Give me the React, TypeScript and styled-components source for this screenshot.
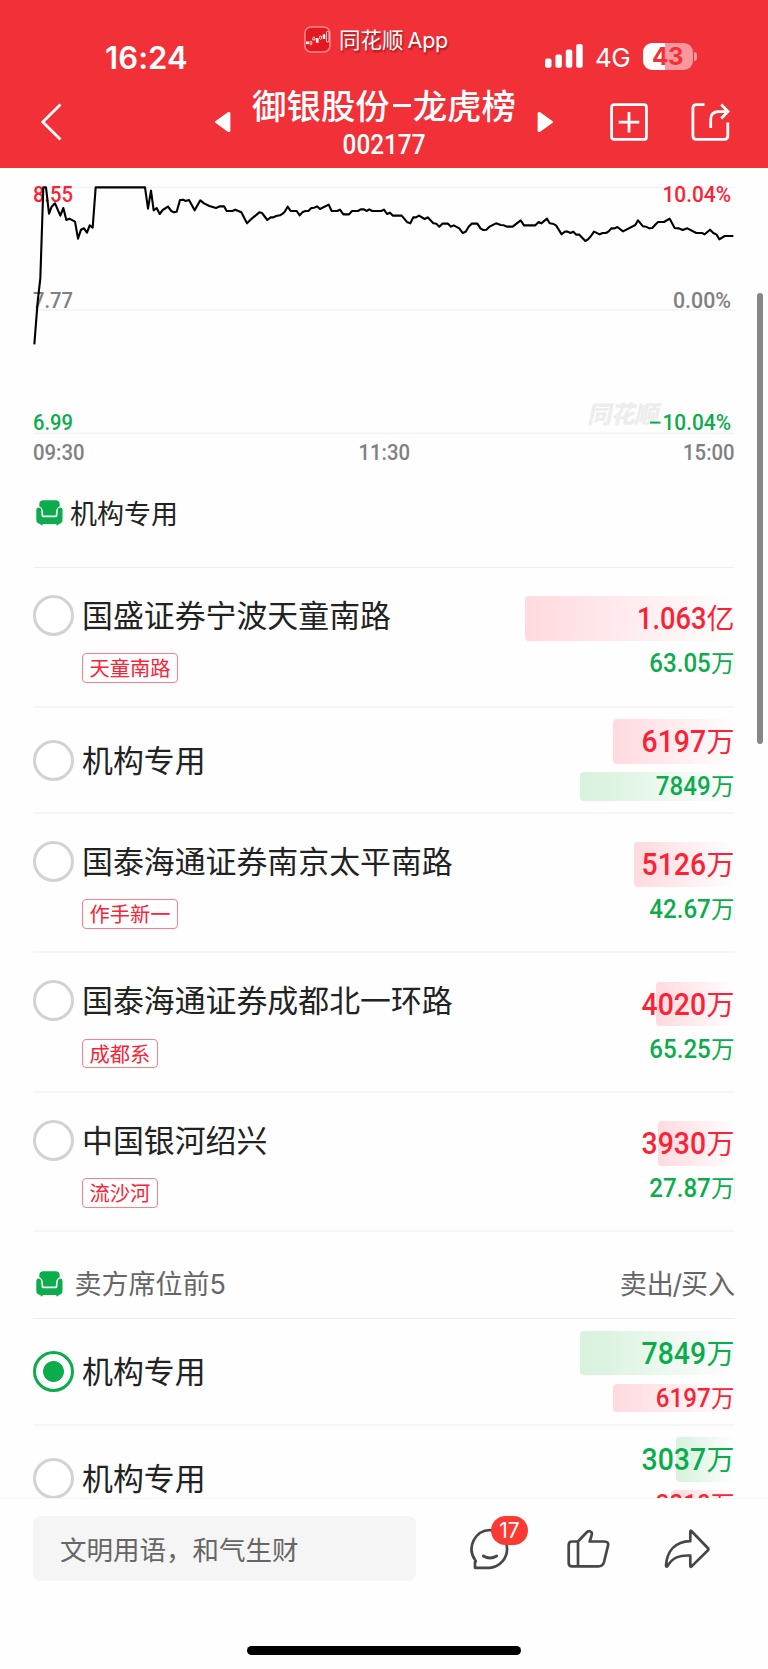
import React from "react";
import styled, { createGlobalStyle } from "styled-components";

const RED = "#fb2235";
const GREEN = "#0aac4b";
const CJK = '"Noto Sans CJK SC", sans-serif';
const LATIN = 'Inter, "Noto Sans CJK SC", sans-serif';
const DIGITS = 'Roboto, "Noto Sans CJK SC", sans-serif';

const GlobalStyle = createGlobalStyle`
  * { box-sizing: border-box; }
  body { margin: 0; background: #fefefe; font-family: ${CJK}; }
`;

const Screen = styled.div`
  position: relative;
  width: 768px;
  height: 1669px;
  overflow: hidden;
  display: flex;
  flex-direction: column;
  background: #fefefe;
  color: #222;
  svg { display: block; flex: none; }
`;

/* ---------- header ---------- */

const Header = styled.header`
  flex: none;
  height: 167.5px;
  background: #f23038;
  color: #fff;
`;

const StatusBar = styled.div`
  display: flex;
  align-items: flex-start;
  height: 83.5px;
  padding-left: 105px;
`;

const Clock = styled.div`
  width: 199px;
  margin-top: 37.5px;
  font: 600 31px/40px ${LATIN};
  letter-spacing: 0.1px;
`;

const AppTag = styled.div`
  display: flex;
  align-items: center;
  width: 241px;
  margin-top: 24.5px;
  height: 30px;
  gap: 8px;
  font: 400 21.5px/30px ${LATIN};
  text-shadow: 1px 2px 2px rgba(90, 0, 0, 0.55);
  white-space: nowrap;
  b { font-weight: 400; margin-left: 4px; letter-spacing: -0.2px; }
`;

const Carrier = styled.div`
  display: flex;
  align-items: center;
  margin-top: 42px;
  height: 28px;
`;

const Network = styled.span`
  width: 48px;
  margin-left: 12px;
  padding-top: 3px;
  font: 400 26px/28px ${LATIN};
  letter-spacing: -0.6px;
`;

const Battery = styled.div`
  width: 49.5px;
  height: 27px;
  border-radius: 9px;
  background: linear-gradient(90deg, #fff 44%, rgba(255, 255, 255, 0.5) 44%);
  color: #f23038;
  font: 700 24px/27px ${LATIN};
  text-align: center;
`;

const BatteryNub = styled.div`
  width: 3px;
  height: 9px;
  margin-left: 1.5px;
  border-radius: 0 4px 4px 0;
  background: rgba(255, 255, 255, 0.5);
`;

const NavBar = styled.nav`
  display: grid;
  grid-template-columns: 231px 306px 231px;
  height: 76px;
`;

const NavSide = styled.div<{ $end?: boolean }>`
  display: flex;
  align-items: center;
  justify-content: ${(p) => (p.$end ? "flex-start" : "space-between")};
  padding-left: ${(p) => (p.$end ? 0 : 40)}px;
`;

const NavGap = styled.div<{ $w: number }>`
  width: ${(p) => p.$w}px;
`;

const NavTitle = styled.div`
  display: flex;
  flex-direction: column;
  align-items: center;
  white-space: nowrap;
`;

const StockName = styled.h1`
  margin: -1px 0 0;
  font: 500 34.4px/42px ${CJK};
  display: flex;
  align-items: center;
`;

const Dash = styled.span`
  width: 18px;
  height: 3px;
  margin: 4px 2px 0 3px;
  background: #fff;
`;

const Stretch = styled.span<{ $k: number; $origin?: string }>`
  display: inline-block;
  transform: scaleX(${(p) => p.$k});
  transform-origin: ${(p) => p.$origin ?? "right"} center;
`;

const StockCode = styled.div`
  font: 500 27px/32px ${DIGITS};
  margin-top: 4px;
`;

/* ---------- chart ---------- */

const Content = styled.main`
  flex: none;
  height: 1330px;
  padding: 0 33px;
  overflow: hidden;
`;

const ChartBox = styled.div`
  height: 267px;
  padding-top: 12.5px;
`;

const TimeAxis = styled.div`
  display: flex;
  justify-content: space-between;
  height: 35px;
  color: #808080;
  font: 500 22.3px/34px ${DIGITS};
`;

/* ---------- seat lists ---------- */

const SectionHead = styled.div<{ $h: number; $muted?: boolean }>`
  display: flex;
  align-items: center;
  height: ${(p) => p.$h}px;
  padding-left: 3px;
  padding-top: ${(p) => (p.$muted ? 17 : 0)}px;
  padding-bottom: ${(p) => (p.$muted ? 0 : 10)}px;
  gap: ${(p) => (p.$muted ? 11.5 : 7)}px;
  border-bottom: 1.5px solid #eeeeee;
  color: ${(p) => (p.$muted ? "#666" : "#222")};
  font: 400 27px/36px ${LATIN};
`;

const HeadText = styled.span<{ $drop: number }>`
  padding-top: ${(p) => p.$drop}px;
`;

const HeadRight = styled.span`
  margin-left: auto;
  padding-top: 3px;
  i { font-style: normal; margin: 0 -1.2px; }
`;

const SeatRow = styled.div<{ $tall: boolean }>`
  display: flex;
  align-items: center;
  justify-content: space-between;
  height: ${(p) => (p.$tall ? 139.4 : 106.4)}px;
  border-bottom: 2px solid #f5f5f5;
`;

const SeatInfo = styled.div<{ $tall: boolean }>`
  padding-top: ${(p) => (p.$tall ? 4 : 1)}px;
`;

const SeatName = styled.div`
  display: flex;
  align-items: center;
  gap: 8px;
  height: 41px;
  font: 400 30.9px/38px ${CJK};
  white-space: nowrap;
`;

const NameText = styled.span`
  padding-bottom: 3px;
`;

const Radio = styled.span<{ $on?: boolean }>`
  width: 41px;
  height: 41px;
  border-radius: 50%;
  border: 2.5px solid ${(p) => (p.$on ? GREEN : "#d2d2d2")};
  border-width: 3px;
  background: ${(p) => (p.$on ? `radial-gradient(circle, ${GREEN} 10px, #fff 10.8px)` : "#fff")};
`;

const Tag = styled.span`
  display: block;
  width: max-content;
  height: 29.5px;
  margin: 17.5px 0 0 49px;
  padding: 0 6.4px;
  border: 1px solid #fc7f89;
  border-radius: 4px;
  color: ${RED};
  font: 400 20.3px/26px ${CJK};
`;

const Amounts = styled.div`
  display: flex;
  flex-direction: column;
  align-items: flex-end;
  gap: 8.5px;
  padding: 0.5px 0.5px 0 0;
`;

const Amount = styled.div<{ $tone: "red" | "green"; $w: number; $small?: boolean }>`
  display: flex;
  justify-content: flex-end;
  align-items: baseline;
  width: ${(p) => p.$w}px;
  height: ${(p) => (p.$small ? 28.5 : 44.5)}px;
  border-radius: 4px 0 0 4px;
  white-space: nowrap;
  color: ${(p) => (p.$tone === "red" ? RED : GREEN)};
  background: linear-gradient(
    90deg,
    ${(p) => (p.$tone === "red" ? "#ffdadf, #ffdfe3 15%" : "#d9f2df, #dcf3e1 15%")},
    #fefefe
  );
  font: 500 ${(p) => (p.$small ? 25.8 : 30.8)}px / ${(p) => (p.$small ? 29.5 : 46)}px ${DIGITS};
`;

const Unit = styled.span<{ $small?: boolean }>`
  font: 400 ${(p) => (p.$small ? 23.5 : 28)}px / 1 ${CJK};
`;

/* ---------- footer ---------- */

const Footer = styled.footer`
  flex: 1;
  display: flex;
  flex-direction: column;
  align-items: center;
  border-top: 1px solid #f5f5f5;
  background: #fefefe;
`;

const ActionBar = styled.div`
  display: flex;
  align-items: center;
  align-self: stretch;
  height: 65px;
  margin-top: 17px;
  padding: 0 33px;
`;

const CommentInput = styled.div`
  width: 383px;
  height: 65px;
  padding-left: 27px;
  border-radius: 8px;
  background: #f5f5f5;
  color: #666;
  font: 400 26.5px/65px ${CJK};
`;

const ActionIcon = styled.div<{ $ml: number }>`
  position: relative;
  margin-left: ${(p) => p.$ml}px;
  padding-top: 1px;
`;

const Badge = styled.span`
  position: absolute;
  left: 22px;
  top: -11px;
  width: 37px;
  height: 29px;
  border-radius: 15px;
  background: #fb3a33;
  color: #fff;
  font: 400 21px/30px ${LATIN};
  text-align: center;
`;

const HomeIndicator = styled.div`
  width: 274px;
  height: 9px;
  margin-top: 65px;
  border-radius: 5px;
  background: #000;
`;

const ScrollThumb = styled.div`
  position: absolute;
  left: 757px;
  top: 293px;
  width: 6px;
  height: 451px;
  border-radius: 3px;
  background: #868686;
`;

/* ---------- data ---------- */

type Seat = {
  name: string;
  tag?: string;
  on?: boolean;
  first: "red" | "green";
  amounts: [string, string, number][];
};

const buySeats: Seat[] = [
  { name: "国盛证券宁波天童南路", tag: "天童南路", first: "red", amounts: [["1.063", "亿", 210], ["63.05", "万", 1]] },
  { name: "机构专用", first: "red", amounts: [["6197", "万", 122], ["7849", "万", 155]] },
  { name: "国泰海通证券南京太平南路", tag: "作手新一", first: "red", amounts: [["5126", "万", 100.5], ["42.67", "万", 1]] },
  { name: "国泰海通证券成都北一环路", tag: "成都系", first: "red", amounts: [["4020", "万", 78.5], ["65.25", "万", 1]] },
  { name: "中国银河绍兴", tag: "流沙河", first: "red", amounts: [["3930", "万", 77], ["27.87", "万", 1]] },
];

const sellSeats: Seat[] = [
  { name: "机构专用", on: true, first: "green", amounts: [["7849", "万", 155], ["6197", "万", 122]] },
  { name: "机构专用", first: "green", amounts: [["3037", "万", 59], ["3310", "万", 64]] },
];

/* Price samples in thirds of a pixel, grouped by stretch of the session. */
const samples: { start: number; pts: string }[] = [
  {
    start: 0,
    pts: "103,538 113,410 121,340 130,67 138,67 147,146 155,125 165,115 181,152 190,129 199,165 208,161 225,170 234,221 243,194 252,190 261,203 269,181 278,188 287,67 435,67 444,131 453,77 461,136 470,129 479,147 488,135 504,125 514,138 522,142 530,140 540,105 549,104 557,108 567,105 584,136 601,106 612,115 628,123 648,129 660,124 672,124 680,138 697,138 706,134 724,142 741,175",
  },
  {
    start: 750,
    pts: "0,166 10,157 28,142 36,144 52,165 62,157 70,157 78,153 90,151 98,146 104,140 113,125 122,138 140,138 149,151 157,142 166,138 175,138 184,129 193,128 201,124 210,132 236,119 245,138 262,138 270,134 280,148 297,148 306,138 324,138 332,133 342,133 350,138 358,133 367,138 394,138 402,134 411,147 420,143 429,152 455,152 472,172 481,175 490,157 498,157 507,152 524,162 533,157 550,175 559,176 568,185 577,176 594,176 603,185 611,181 628,190 638,204 647,200 656,185 665,176 682,176 692,191 700,195 709,194 720,184 738,175 752,180 762,181 770,185",
  },
  {
    start: 1524,
    pts: "0,185 14,185 38,166 48,181 82,181 92,171 100,175 117,161 125,175 134,176 144,181 161,208 170,200 179,200 187,204 196,200 205,209 214,209 232,228 240,223 249,213 258,200 275,208 284,204 294,204 302,199 310,190 320,190 328,186 345,199 382,180 390,166 405,184 414,185 424,190 433,189 441,180 450,171 468,171 485,161 500,189 512,190 524,195 538,190 565,204 582,204 590,208 606,194 616,204 626,209 634,223 650,213 676,213",
  },
];

const linePoints = samples
  .flatMap(({ start, pts }) =>
    pts.split(" ").map((p) => {
      const [x, y] = p.split(",").map(Number);
      return `${((x + start) / 3 - 33).toFixed(2)},${(y / 3 - 15).toFixed(2)}`;
    })
  )
  .join(" ");

/* ---------- drawings ---------- */

const ChartLabel = ({ x, y, w, color, children }: { x: number; y: number; w: number; color: string; children: string }) => (
  <text x={x} y={y} textLength={w} lengthAdjust="spacingAndGlyphs" fill={color} fontFamily="Roboto, sans-serif" fontSize="22.3" fontWeight="500">
    {children}
  </text>
);

const PriceChart = () => (
  <svg width="702" height="254" viewBox="0 0 702 254">
    <g stroke="#f2f2f2" strokeWidth="1.4">
      <path d="M0 7.4H702M0 130H702M0 253.2H702" />
    </g>
    <text x="555" y="243" fontFamily="Noto Sans CJK SC, sans-serif" fontSize="24" fontWeight="900" fill="#ededed" textLength="71" transform="translate(51 0) skewX(-12)">
      同花顺
    </text>
    <ChartLabel x={0} y={21.7} w={40} color={RED}>8.55</ChartLabel>
    <ChartLabel x={0} y={128.3} w={40} color="#808080">7.77</ChartLabel>
    <ChartLabel x={0} y={250.3} w={40} color={GREEN}>6.99</ChartLabel>
    <ChartLabel x={629.5} y={21.7} w={68.5} color={RED}>10.04%</ChartLabel>
    <ChartLabel x={640} y={128.3} w={58} color="#808080">0.00%</ChartLabel>
    <path d="M617 242.6H627.5" stroke={GREEN} strokeWidth="2" />
    <ChartLabel x={629.5} y={250.3} w={68.5} color={GREEN}>10.04%</ChartLabel>
    <polyline points={linePoints} fill="none" stroke="#000" strokeWidth="2.1" strokeLinejoin="round" />
  </svg>
);

const Armchair = () => (
  <svg width="27" height="26" viewBox="0 0 27 26" fill={GREEN}>
    <path d="M3.3 6.3V4.2Q3.3 0.2 7.5 0.2H19.5Q23.7 0.2 23.7 4.2V6.3Q20.6 7.4 20.2 11L19.7 15.6H7.3L6.8 11Q6.4 7.4 3.3 6.3Z" />
    <path d="M0.3 10Q0.3 7.6 2.7 7.6Q5 7.6 5.2 10.2L5.6 15.7Q5.8 17.2 7.2 17.2H19.8Q21.2 17.2 21.4 15.7L21.8 10.2Q22 7.6 24.3 7.6Q26.5 7.6 26.5 10V19.8Q26.5 23.6 22.6 24L22.2 25.2H20.6L20.2 24H6.8L6.4 25.2H4.8L4.4 24Q0.3 23.6 0.3 19.8Z" />
  </svg>
);

const AppLogo = () => (
  <svg width="27" height="27" viewBox="0 0 27 27">
    <rect x="0.9" y="0.9" width="25" height="25" rx="6" fill="#e3191f" stroke="#f88a8d" strokeWidth="1.5" />
    <g stroke="#fff" strokeWidth="0.8" fill="none">
      <path d="M2 16.8H5" strokeWidth="2.6" />
      <rect x="6" y="15.3" width="1.8" height="3.4" rx="0.5" />
      <path d="M8.8 13.9V12L9.9 10.8L11 12V13.9Z" />
      <path d="M13.2 12V16.8" strokeWidth="2.6" />
      <path d="M15.6 10.2h2v2.4l-1 .8l-1-.8z" />
      <path d="M20 8.3V13" strokeWidth="2.4" />
      <rect x="22.4" y="5.4" width="2.6" height="10.6" rx="1.1" />
    </g>
  </svg>
);

const Signal = () => (
  <svg width="38" height="24" viewBox="0 0 38 24" fill="#fff">
    <rect x="0" y="14.5" width="6.5" height="9.3" rx="2" />
    <rect x="10.4" y="10.5" width="6.5" height="13.3" rx="2" />
    <rect x="20.8" y="5.5" width="6.5" height="18.3" rx="2" />
    <rect x="31.2" y="0" width="6.5" height="23.8" rx="2" />
  </svg>
);

const BackIcon = () => (
  <svg width="22" height="38" viewBox="0 0 22 38">
    <path d="M20.5 1.5L2.8 19L20.5 36.5" fill="none" stroke="#fff" strokeWidth="2.8" />
  </svg>
);

const Triangle = ({ flip }: { flip?: boolean }) => (
  <svg width="17" height="22" viewBox="0 0 17 22">
    <path
      d="M1.3 10.2L14.2 1.1Q16.4 0.3 16.4 2.6V19.4Q16.4 21.7 14.2 20.9L1.3 11.8Q0.2 11 1.3 10.2Z"
      fill="#fff"
      transform={flip ? "matrix(-1 0 0 1 17 0)" : undefined}
    />
  </svg>
);

const AddIcon = () => (
  <svg width="38" height="38" viewBox="0 0 38 38" fill="none" stroke="#fff" strokeWidth="2.8">
    <rect x="1.6" y="1.6" width="34.8" height="34.8" rx="2.5" />
    <path d="M19 9V29.5M8.7 19.2H29.3" />
  </svg>
);

const ExportIcon = () => (
  <svg width="40" height="38" viewBox="0 0 40 38" fill="none" stroke="#fff" strokeWidth="2.8">
    <path d="M13.5 1.6H5.5Q1.9 1.6 1.9 5.2V32.8Q1.9 36.4 5.5 36.4H33.2Q36.8 36.4 36.8 32.8V19.5" />
    <path d="M19.7 25V16.5Q19.7 8.6 27.5 8.6H36.5M30.2 1.6L37 8.6L30.2 15.6" />
  </svg>
);

const actionStroke = {
  fill: "none",
  stroke: "#474747",
  strokeWidth: 2.7,
  strokeLinejoin: "round" as const,
  strokeLinecap: "round" as const,
};

const ChatIcon = () => (
  <svg width="42" height="42" viewBox="0 0 42 42" {...actionStroke}>
    <path d="M21 2A19 19 0 0 1 21 39.8H6V34Q7.5 33.4 6 31.8A19 19 0 0 1 21 2Z" />
    <path d="M14.3 28Q21 32 27.7 28" strokeWidth="2.9" />
  </svg>
);

const LikeIcon = () => (
  <svg width="43" height="39" viewBox="0 0 43 39" {...actionStroke}>
    <path d="M11 12.5L20 3Q22.5 1 24.5 3.3Q25.2 4.5 24.6 6.4L22.7 12.5H37.5Q42 12.5 41 16.6L37 33Q35.8 37.4 31.5 37.4H5Q1.7 37.4 1.7 34V16Q1.7 12.5 5 12.5ZM11 12.5V37.4" />
  </svg>
);

const ForwardIcon = () => (
  <svg width="46" height="40" viewBox="0 0 46 40" {...actionStroke}>
    <path d="M26.3 2.7Q26.3 1 27.6 2.2L44 19.2Q44.8 20.2 44 21.2L27.6 37.4Q26.3 38.5 26.3 36.8V26.6C15 26 8.8 28.5 3.5 37Q2.2 38.3 2 36.5C3 21.5 11.5 12.8 26.3 12.2Z" />
  </svg>
);

/* ---------- page ---------- */

const digitScale = (value: string, small: boolean) => {
  if (small) return 0.935;
  return value.includes(".") ? 0.885 : 0.92;
};

const SeatItem = ({ seat }: { seat: Seat }) => {
  const tall = Boolean(seat.tag);
  const second = seat.first === "red" ? "green" : "red";
  return (
    <SeatRow $tall={tall}>
      <SeatInfo $tall={tall}>
        <SeatName>
          <Radio $on={seat.on} />
          <NameText>{seat.name}</NameText>
        </SeatName>
        {seat.tag && <Tag>{seat.tag}</Tag>}
      </SeatInfo>
      <Amounts>
        {seat.amounts.map(([value, unit, w], i) => (
          <Amount key={i} $tone={i === 0 ? seat.first : second} $w={w} $small={i === 1}>
            <Stretch $k={digitScale(value, i === 1)}>{value}</Stretch>
            <Unit $small={i === 1}>{unit}</Unit>
          </Amount>
        ))}
      </Amounts>
    </SeatRow>
  );
};

export default function App() {
  return (
    <Screen>
      <GlobalStyle />
      <Header>
        <StatusBar>
          <Clock>16:24</Clock>
          <AppTag>
            <AppLogo />
            <span>
              同花顺<b>App</b>
            </span>
          </AppTag>
          <Carrier>
            <Signal />
            <Network>4G</Network>
            <Battery>43</Battery>
            <BatteryNub />
          </Carrier>
        </StatusBar>
        <NavBar>
          <NavSide>
            <BackIcon />
            <Triangle />
          </NavSide>
          <NavTitle>
            <StockName>
              御银股份
              <Dash />
              龙虎榜
            </StockName>
            <StockCode>
              <Stretch $k={0.9} $origin="center">002177</Stretch>
            </StockCode>
          </NavTitle>
          <NavSide $end>
            <Triangle flip />
            <NavGap $w={55.5} />
            <AddIcon />
            <NavGap $w={43.5} />
            <ExportIcon />
          </NavSide>
        </NavBar>
      </Header>
      <Content>
        <ChartBox>
          <PriceChart />
        </ChartBox>
        <TimeAxis>
          <Stretch $k={0.91} $origin="left">09:30</Stretch>
          <Stretch $k={0.91} $origin="center">11:30</Stretch>
          <Stretch $k={0.91}>15:00</Stretch>
        </TimeAxis>
        <SectionHead $h={98.8}>
          <Armchair />
          <HeadText $drop={3}>机构专用</HeadText>
        </SectionHead>
        {buySeats.map((s, i) => (
          <SeatItem key={i} seat={s} />
        ))}
        <SectionHead $h={87} $muted>
          <Armchair />
          <HeadText $drop={3}>卖方席位前5</HeadText>
          <HeadRight>
            卖出<i>/</i>买入
          </HeadRight>
        </SectionHead>
        {sellSeats.map((s, i) => (
          <SeatItem key={i} seat={s} />
        ))}
      </Content>
      <Footer>
        <ActionBar>
          <CommentInput>文明用语，和气生财</CommentInput>
          <ActionIcon $ml={53}>
            <ChatIcon />
            <Badge>17</Badge>
          </ActionIcon>
          <ActionIcon $ml={55.5}>
            <LikeIcon />
          </ActionIcon>
          <ActionIcon $ml={54}>
            <ForwardIcon />
          </ActionIcon>
        </ActionBar>
        <HomeIndicator />
      </Footer>
      <ScrollThumb />
    </Screen>
  );
}
